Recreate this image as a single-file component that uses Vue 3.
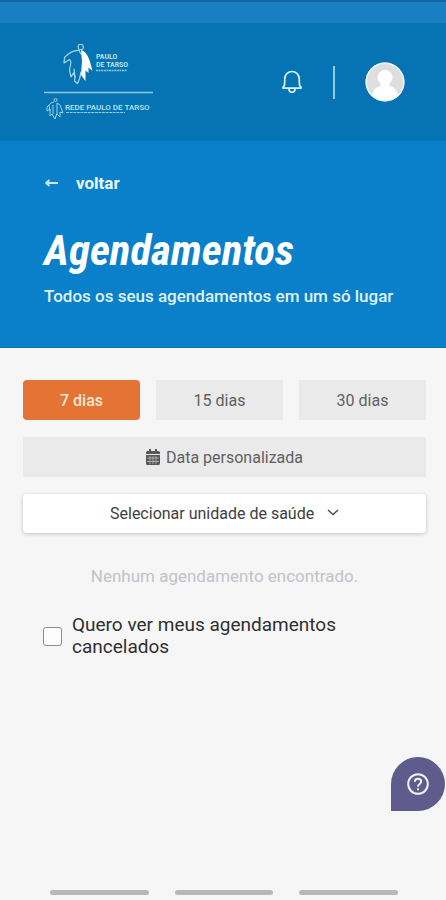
<script setup>
import { ref } from 'vue'

const periods = [7, 15, 30]
const selected = ref(7)
const showCancelled = ref(false)
const unit = ref('')
</script>

<template>
  <div class="page">
    <div class="status-bar"></div>

    <header class="topbar">
      <div class="brand">
        <svg class="logo" viewBox="0 0 112 80" role="img" aria-label="Paulo de Tarso">
          <g fill="none" stroke="#a5dae9" stroke-width="1.200" stroke-linejoin="round" stroke-linecap="round">
            <rect x="35.200" y="2.500" width="5" height="5" rx="1.800" />
            <path d="M36 8.500C31 8 25 12 21.500 15.500L21 21L26.500 17.500L28 20L26.500 28L28 35L30.500 31L32 35L31.500 39L34.500 41.500L36.500 37L38 30" />
            <path d="M31 27L32 35M36 8.500L38 12" />
          </g>
          <path d="M38 8C44 9 47 18 49.500 29L45.500 25.500L45.500 31L42.500 28.500L42.500 39L38 33L39 19Z" fill="#fff" />
          <text class="logo-name" x="53" y="17">PAULO</text>
          <text class="logo-name" x="53" y="25">DE TARSO</text>
          <path d="M53 28.500H84" stroke="#8acbe0" stroke-width="1.500" stroke-dasharray="2 .6" />
          <path d="M1 50.500H110" stroke="#8acbe0" stroke-width="1.300" />
          <g fill="none" stroke="#9bd5e5" stroke-width="1" stroke-linejoin="round">
            <circle cx="12.500" cy="58" r="1.500" />
            <path d="M11 60L8 61L4 65V69L7 67V74L9 72L12 77L14 71L14 61L17 63L20 71L17 70V75L14 72M10 63V72M6 63L7 69" />
          </g>
          <text class="logo-network" x="22" y="67.500">REDE PAULO DE TARSO</text>
          <path d="M23 70.500H82" stroke="#8acbe0" stroke-width="1.200" stroke-dasharray="3 .6" />
        </svg>
      </div>
      <div class="actions">
        <button class="icon-button" aria-label="Notificações">
          <svg width="22" height="24" viewBox="0 0 22 24" fill="none" stroke="#d8f3fa" stroke-width="1.700" stroke-linejoin="round">
            <path d="M2 18.200H20V17C18.400 16.400 18.300 15 18.300 12.500V9C18.300 4.700 15 1.500 11 1.500S3.700 4.700 3.700 9V12.500C3.700 15 3.600 16.400 2 17Z" />
            <path d="M8 18.500C8 21 9 22.300 11 22.300S14 21 14 18.500" />
          </svg>
        </button>
        <span class="divider"></span>
        <button class="icon-button" aria-label="Perfil">
          <svg width="40" height="40" viewBox="0 0 40 40">
            <circle cx="20" cy="20" r="19.500" fill="#dedede" />
            <circle cx="20" cy="15.500" r="7.500" fill="#fff" />
            <path d="M15.500 20H24.500V24C29 25 32 28 33 33.500A19 19 0 0 1 7 33.500C8 28 11 25 15.500 24Z" fill="#fff" />
            <circle cx="20" cy="20" r="18.800" fill="none" stroke="#eef4f7" stroke-width="1.400" />
          </svg>
        </button>
      </div>
    </header>

    <section class="hero">
      <a class="back" href="#">
        <svg width="16" height="10" viewBox="0 0 16 10" fill="none" stroke="#c9e8f5" stroke-width="1.900" stroke-linejoin="round">
          <path d="M14 5H2M5.500 2L2 5L5.500 8" />
        </svg>
        voltar
      </a>
      <h1>Agendamentos</h1>
      <p>Todos os seus agendamentos em um só lugar</p>
    </section>

    <main class="content">
      <div class="periods">
        <button
          v-for="days in periods"
          :key="days"
          class="period"
          :class="{ active: selected === days }"
          @click="selected = days"
        >{{ days }} dias</button>
      </div>

      <button class="custom-date">
        <svg width="14" height="16" viewBox="0 0 14 16">
          <path fill="#585858" d="M3 0H5V2H9V0H11V2H12.500Q14 2 14 3.500V5H0V3.500Q0 2 1.500 2H3ZM0 6H14V14.500Q14 16 12.500 16H1.500Q0 16 0 14.500Z" />
          <path stroke="#bcbcbc" stroke-width=".8" d="M1 9H13M1 12.500H13M4 7V15M7 7V15M10 7V15" />
        </svg>
        Data personalizada
      </button>

      <label class="unit">
        <select v-model="unit" aria-label="Unidade de saúde">
          <option value="">Selecionar unidade de saúde</option>
        </select>
        <svg width="12" height="12" viewBox="0 0 12 12" fill="none" stroke="#4a4a4a" stroke-width="1.400">
          <path d="M1 2L6 6.500L11 2" />
        </svg>
      </label>

      <p class="empty">Nenhum agendamento encontrado.</p>

      <label class="cancelled">
        <input v-model="showCancelled" type="checkbox" />
        <span>Quero ver meus agendamentos cancelados</span>
      </label>
    </main>

    <button class="help" aria-label="Ajuda">
      <svg width="24" height="24" viewBox="0 0 24 24" fill="none" stroke="#f3f1fa" stroke-width="2">
        <circle cx="12" cy="12" r="9.800" />
        <path d="M8.800 9.800C8.800 7.800 10.200 6.700 12 6.700S15.200 7.900 15.200 9.600C15.200 12 12 12 12 14.700M12 16.200V18.200" />
      </svg>
    </button>

    <footer class="system-nav">
      <span v-for="n in 3" :key="n"></span>
    </footer>
  </div>
</template>

<style>
body {
  background: #f6f6f6;
}
</style>

<style scoped>
.page {
  display: flex;
  flex-direction: column;
  min-height: 100vh;
  background: #f6f6f6;
  color: #303030;
  font-family: Roboto, sans-serif;
  font-size: 16px;
}
button {
  border: 0;
  padding: 0;
  background: none;
  font: inherit;
  cursor: pointer;
}
svg {
  display: block;
  flex: none;
}
.status-bar {
  height: 21px;
  border-top: 2px solid #1763a3;
  background: #187fc3;
}
.topbar {
  display: flex;
  align-items: center;
  justify-content: space-between;
  height: 118px;
  box-sizing: border-box;
  padding: 0 41px 0 43px;
  background: #0573b4;
}
.logo {
  width: 112px;
  height: 80px;
}
.logo-name {
  fill: #c8edf4;
  font-family: "Roboto Condensed", Roboto, sans-serif;
  font-size: 8px;
  font-weight: 500;
}
.logo-network {
  fill: #b9e6f0;
  font-size: 8px;
  font-weight: 500;
}
.actions {
  display: flex;
  align-items: center;
  gap: 30px;
}
.divider {
  width: 2px;
  height: 33px;
  background: #8fcce3;
}
.hero {
  padding: 32px 44px 40px;
  background: #0a80ca;
  color: #fff;
  border-bottom: 1px solid #0873b8;
}
.back {
  display: inline-flex;
  align-items: center;
  gap: 16px;
  color: #e9f8fc;
  font-size: 17px;
  font-weight: 700;
  line-height: 20px;
  text-decoration: none;
}
h1 {
  margin: 31px 0 9px;
  font-family: "Roboto Condensed", "Liberation Sans Narrow", Roboto, sans-serif;
  font-size: 43px;
  font-style: italic;
  font-weight: 700;
  line-height: 52px;
}
.hero p {
  margin: 0;
  color: #dff3fa;
  font-size: 17px;
  font-weight: 500;
  line-height: 22px;
}
.content {
  display: flex;
  flex-direction: column;
  flex: 1;
  padding: 32px 20px 32px 23px;
}
.periods {
  display: grid;
  grid-template-columns: 117fr 127fr 127fr;
  gap: 16px;
}
.period,
.custom-date {
  height: 40px;
  background: #eaeaea;
  color: #606060;
}
.period.active {
  border-radius: 4px;
  background: #e57333;
  color: #ffe9d8;
  font-weight: 500;
}
.custom-date {
  display: flex;
  align-items: center;
  justify-content: center;
  gap: 6px;
  margin-top: 17px;
}
.unit {
  display: flex;
  align-items: center;
  justify-content: center;
  gap: 12px;
  height: 39px;
  margin-top: 17px;
  border-radius: 4px;
  background: #fff;
  box-shadow: 0 1px 4px rgba(0, 0, 0, 0.2);
}
select {
  appearance: none;
  border: 0;
  padding: 0;
  background: none;
  color: #404040;
  font: inherit;
}
.empty {
  margin: 33px 0 0;
  color: #c2c2ca;
  font-size: 17px;
  line-height: 20px;
  text-align: center;
}
.cancelled {
  display: flex;
  align-items: center;
  gap: 10px;
  width: 310px;
  max-width: 100%;
  margin: 28px 0 0 20px;
  font-size: 19px;
  line-height: 22px;
}
.cancelled input {
  appearance: none;
  flex: none;
  width: 19px;
  height: 19px;
  margin: 0;
  border: 1px solid #8d8d8d;
  border-radius: 3px;
  background: #fdfdfd;
}
.cancelled input:checked {
  background: #0a80ca;
}
.help {
  position: fixed;
  right: 1px;
  bottom: 89px;
  display: flex;
  align-items: center;
  justify-content: center;
  width: 54px;
  height: 54px;
  border-radius: 27px 27px 27px 0;
  background: #5f5b8c;
}
.system-nav {
  display: grid;
  grid-template-columns: repeat(3, 1fr);
  gap: 26px;
  padding: 0 48px 5px 50px;
}
.system-nav span {
  height: 5px;
  border-radius: 3px;
  background: #b8b8b8;
}
</style>
